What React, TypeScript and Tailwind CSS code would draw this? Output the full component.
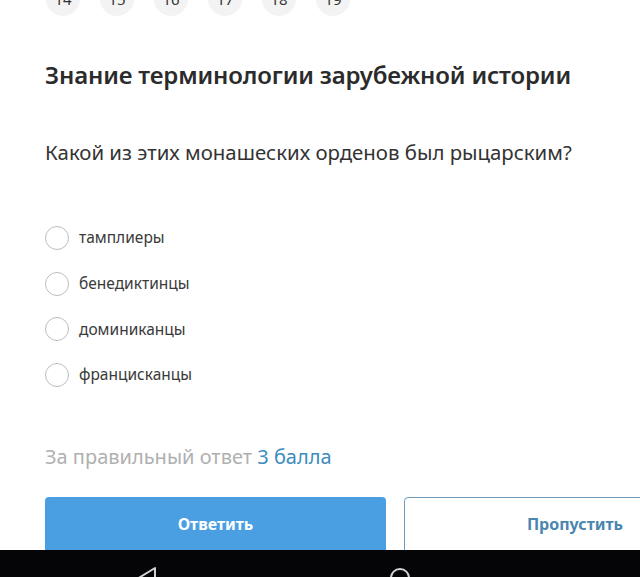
import React from "react";

const nums = [14, 15, 16, 17, 18, 19];
const options = ["тамплиеры", "бенедиктинцы", "доминиканцы", "францисканцы"];

export default function App() {
  return (
    <div
      className="relative w-[640px] h-[577px] overflow-hidden bg-white flex flex-col"
      style={{ fontFamily: '"Noto Sans", "Open Sans", sans-serif' }}
    >
      <div className="flex gap-[20px] pl-[46px] mt-[-18px] shrink-0">
        {nums.map((n) => (
          <div
            key={n}
            className="w-[34px] h-[34px] rounded-full bg-[#f3f3f3] flex items-center justify-center text-[15px] text-[#333]"
          >
            {n}
          </div>
        ))}
      </div>

      <div className="pl-[45px] flex flex-col shrink-0">
        <h1 className="mt-[43px] text-[24px] leading-[32px] font-semibold text-[#2b2b2b] tracking-[-0.15px]">
          Знание терминологии зарубежной истории
        </h1>
        <p className="mt-[47px] text-[20.4px] leading-[28px] text-[#333]">
          Какой из этих монашеских орденов был рыцарским?
        </p>

        <div className="mt-[60px] flex flex-col gap-[21.6px]">
          {options.map((o) => (
            <div key={o} className="flex items-center h-[24px]">
              <div className="w-[24px] h-[24px] rounded-full border border-[#bdbdbd] bg-white" />
              <span className="ml-[10px] text-[15.5px] text-[#3a3a3a]">{o}</span>
            </div>
          ))}
        </div>

        <p className="mt-[57px] text-[20px] leading-[26px] text-[#b0b0b0]">
          За правильный ответ <span className="text-[#3d8cc0]">3 балла</span>
        </p>
      </div>

      <div className="flex-1 overflow-hidden pl-[45px] pt-[27px] flex gap-[18px]">
        <div className="w-[341px] h-[60px] rounded-[4px] bg-[#4a9fe3] flex items-start justify-center pt-[15px] text-white text-[16px] font-bold shrink-0">
          Ответить
        </div>
        <div className="w-[342px] h-[60px] rounded-[4px] border border-[#6f9cbd] bg-white flex items-start justify-center pt-[14px] text-[#4a86b0] text-[16px] font-bold shrink-0">
          Пропустить
        </div>
      </div>

      <div className="h-[27px] bg-[#050507] shrink-0 overflow-hidden">
        <svg width="640" height="27" viewBox="0 0 640 27">
          <path d="M155 18 L155 40 L137 29 Z" fill="none" stroke="#d0d0d0" strokeWidth="2" strokeLinejoin="round" />
          <circle cx="400" cy="28" r="9" fill="none" stroke="#d0d0d0" strokeWidth="2" />
        </svg>
      </div>
    </div>
  );
}
